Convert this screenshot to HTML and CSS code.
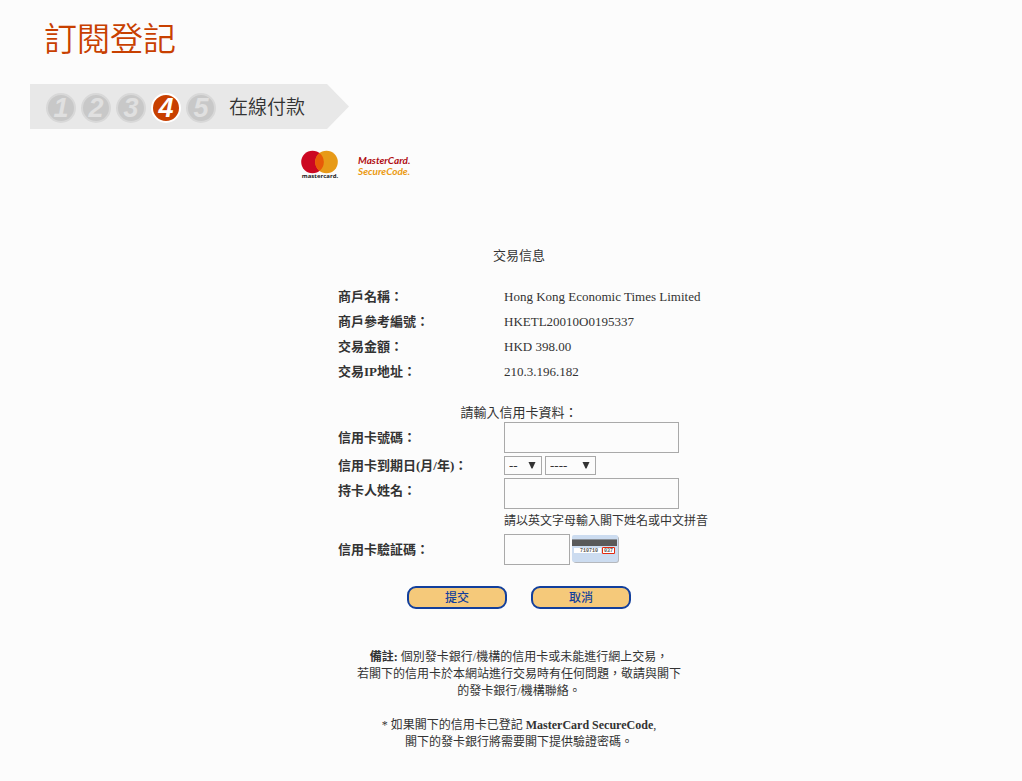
FILE: index.html
```html
<!DOCTYPE html>
<html lang="zh-Hant">
<head>
<meta charset="utf-8">
<meta name="viewport" content="width=device-width, initial-scale=1">
<title>訂閱登記</title>
<link rel="stylesheet" href="styles.css">
</head>
<body>
<header class="page-header">
  <h1 class="page-title">訂閱登記</h1>
  <div class="steps">
    <ol class="step-list">
      <li class="step">1</li>
      <li class="step">2</li>
      <li class="step">3</li>
      <li class="step step-current" aria-current="step">4</li>
      <li class="step">5</li>
    </ol>
    <span class="step-label">在線付款</span>
  </div>
</header>
<main class="payment">
  <div class="logos">
    <svg class="logo-mastercard" width="38" height="30" viewBox="0 0 38 30" role="img" aria-label="mastercard">
      <circle cx="11.500" cy="12" r="11.300" fill="#cc0822"/>
      <circle cx="25.500" cy="12" r="11.300" fill="#e79a18"/>
      <path d="M18.500 3.100a11.300 11.300 0 0 1 0 17.800a11.300 11.300 0 0 1 0-17.800z" fill="#e85a08"/>
      <text class="logo-name" x="19" y="28" text-anchor="middle">mastercard.</text>
    </svg>
    <div class="securecode"><span class="securecode-brand">MasterCard.</span><span class="securecode-name">SecureCode.</span></div>
  </div>
  <h2 class="caption caption-info">交易信息</h2>
  <dl class="fields info">
    <dt class="label">商戶名稱：</dt><dd class="value">Hong Kong Economic Times Limited</dd>
    <dt class="label">商戶參考編號：</dt><dd class="value">HKETL20010O0195337</dd>
    <dt class="label">交易金額：</dt><dd class="value">HKD 398.00</dd>
    <dt class="label">交易IP地址：</dt><dd class="value">210.3.196.182</dd>
  </dl>
  <form class="card-form">
    <h2 class="caption">請輸入信用卡資料：</h2>
    <div class="fields controls">
      <label class="label" for="card-number">信用卡號碼：</label>
      <input class="textbox" id="card-number" type="text" inputmode="numeric">
      <label class="label" for="expiry-month">信用卡到期日(月/年)：</label>
      <div class="expiry">
        <span class="picker"><select class="select select-month" id="expiry-month"><option>--</option></select><svg class="arrow" width="8" height="7" viewBox="0 0 8 7"><path d="M.5 0h7L4.500 6.500h-1z"/></svg></span>
        <span class="picker"><select class="select select-year" aria-label="信用卡到期日(年)"><option>----</option></select><svg class="arrow" width="8" height="7" viewBox="0 0 8 7"><path d="M.5 0h7L4.500 6.500h-1z"/></svg></span>
      </div>
      <label class="label label-top" for="holder">持卡人姓名：</label>
      <div class="holder">
        <input class="textbox" id="holder" type="text" aria-describedby="holder-hint">
        <p class="hint" id="holder-hint">請以英文字母輸入閣下姓名或中文拼音</p>
      </div>
      <label class="label" for="cvv">信用卡驗証碼：</label>
      <div class="cvv">
        <input class="textbox textbox-short" id="cvv" type="text" inputmode="numeric">
        <svg class="card-back" width="48" height="30" viewBox="0 0 48 30" aria-hidden="true">
          <rect x="1" y="2" width="46" height="27" rx="3" fill="#b5b8bd"/>
          <rect x="0" y="1" width="46" height="27" rx="2" fill="#ccdcf0"/>
          <path d="M0 6h45v6H0z" fill="#595959"/>
          <path d="M0 5h45v1H0z" fill="#8b9198"/>
          <path d="M2 14h27v5H2zM30 13h13v7H30z" fill="#fff"/>
          <text class="card-digits" x="8" y="18">710710</text>
          <text class="card-digits" x="32" y="18">037</text>
          <path d="M30.500 13.500h12v6h-12z" fill="none" stroke="#e22a10"/>
        </svg>
      </div>
    </div>
    <div class="actions">
      <button class="button" type="submit">提交</button>
      <button class="button" type="reset">取消</button>
    </div>
  </form>
  <div class="notes">
    <p class="note"><b>備註:</b> 個別發卡銀行/機構的信用卡或未能進行網上交易，<br>若閣下的信用卡於本網站進行交易時有任何問題，敬請與閣下<br>的發卡銀行/機構聯絡。</p>
    <p class="note">* 如果閣下的信用卡已登記 <b>MasterCard SecureCode</b>,<br>閣下的發卡銀行將需要閣下提供驗證密碼。</p>
  </div>
</main>
</body>
</html>
```
FILE: styles.css
```css
* { box-sizing: border-box; }

body {
  margin: 0;
  background: #fcfcfc;
  color: #333;
  font: 13px/17px "Liberation Serif", "Noto Sans CJK TC", serif;
}

h1, h2, p, dl, dd, ol { margin: 0; padding: 0; }

.page-header { padding: 13px 30px 0; }

.page-title {
  padding-left: 14px;
  color: #c84000;
  font: 350 33px/48px "Noto Sans CJK TC", sans-serif;
}

.steps {
  display: flex;
  align-items: center;
  width: 319px;
  height: 45px;
  margin-top: 23px;
  padding: 2px 0 0 16px;
  background: #e8e8e8;
  clip-path: polygon(0 0, calc(100% - 22px) 0, 100% 50%, calc(100% - 22px) 100%, 0 100%);
}

.step-list {
  display: flex;
  gap: 5px;
  list-style: none;
}

.step {
  width: 30px;
  height: 30px;
  border: 2px solid #d8d8d8;
  border-radius: 50%;
  background: #c8c8c8;
  color: #e0e0e0;
  font: italic bold 27px/27px "Liberation Sans", sans-serif;
  text-align: center;
}

.step-current {
  border-color: #fff;
  background: #c84000;
  color: #fff;
}

.step-label {
  padding: 0 0 3px 13px;
  font: 350 19px/24px "Noto Sans CJK TC", sans-serif;
}

.payment {
  width: 100%;
  max-width: 452px;
  margin: 0 auto;
  padding: 21px 0 24px 16px;
}

.logos {
  display: flex;
  align-items: center;
  gap: 19px;
}

.logo-name { font: bold 6px "Open Sans", sans-serif; fill: #222; }

.securecode {
  display: flex;
  flex-direction: column;
  padding-top: 2px;
  font: italic bold 10px/11px Lato, sans-serif;
}

.securecode-brand { color: #b00d12; }
.securecode-name { color: #eb9a12; }

.caption {
  font-size: 13px;
  font-weight: 400;
  line-height: 17px;
  text-align: center;
}

.caption-info { margin-top: 67px; }

.fields {
  display: grid;
  grid-template-columns: 166px 1fr;
  padding-left: 37px;
}

.info {
  grid-auto-rows: 25px;
  align-items: center;
  margin-top: 20px;
}

.label { font-weight: 700; }

.card-form { margin-top: 20px; }

.controls {
  row-gap: 3px;
  align-items: center;
  margin-top: 1px;
}

.label-top { align-self: start; padding-top: 4px; }

.textbox {
  width: 175px;
  height: 31px;
  padding: 4px;
  border: 1px solid #a9a9a9;
  background: #fcfcfc;
  color: #333;
  font: inherit;
}

.textbox-short { width: 66px; }

.expiry { display: flex; gap: 3px; }

.picker { display: grid; align-items: center; }

.select {
  grid-area: 1 / 1;
  height: 19px;
  padding: 0 4px;
  appearance: none;
  border: 1px solid #a9a9a9;
  border-radius: 0;
  background: #fcfcfc;
  color: #333;
  font: inherit;
}

.select-month { width: 38px; }
.select-year { width: 51px; }

.arrow {
  grid-area: 1 / 1;
  justify-self: end;
  margin-right: 6px;
  fill: #333;
  pointer-events: none;
}

.holder { display: grid; }

.hint {
  padding: 4px 0 1px;
  font-size: 12px;
  line-height: 17px;
  white-space: nowrap;
}

.cvv { display: flex; gap: 2px; }

.card-digits { font: bold 5px "Liberation Mono", monospace; fill: #555; }

.actions {
  display: flex;
  justify-content: center;
  gap: 24px;
  margin-top: 21px;
}

.button {
  width: 100px;
  height: 23px;
  padding: 0 0 2px;
  border: 2px solid #123f9c;
  border-radius: 9px;
  background: #f5c97a;
  color: #123f9c;
  font: 500 12px/17px "Noto Sans CJK TC", sans-serif;
}

.notes {
  display: grid;
  gap: 17px;
  margin-top: 40px;
  font-size: 12px;
  text-align: center;
}
```
